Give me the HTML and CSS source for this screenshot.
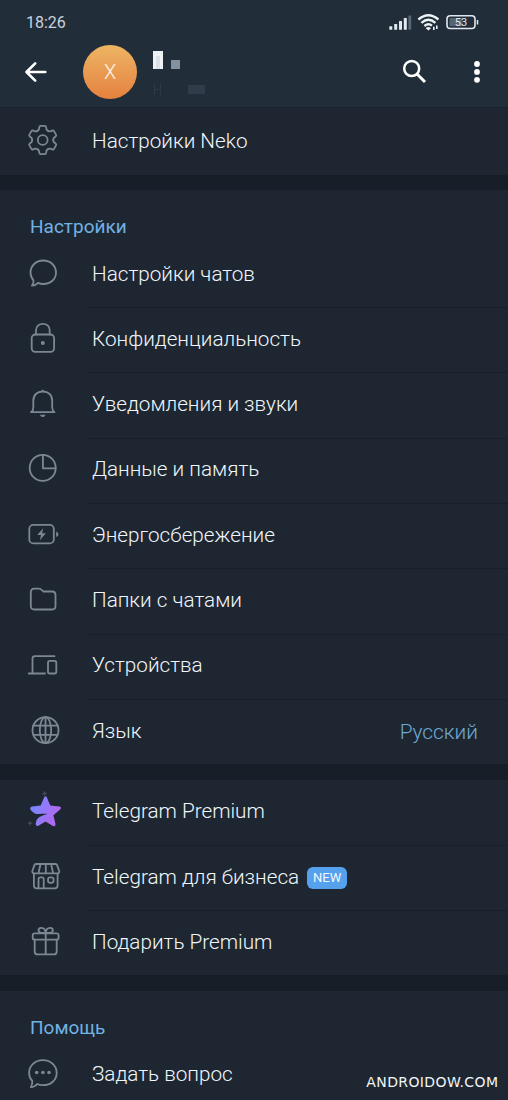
FILE: index.html
```html
<!DOCTYPE html>
<html lang="ru">
<head>
<meta charset="utf-8">
<title>Настройки</title>
<link rel="stylesheet" href="styles.css">
</head>
<body>
<main class="screen">
  <header class="header">
    <div class="status">
      <span class="clock">18:26</span>
      <svg class="status-icons" width="92" height="20" viewBox="388 12 92 20">
        <g fill="#e2e8ef">
          <rect x="389.3" y="26.3" width="3" height="3.5" rx=".5"/>
          <rect x="394.2" y="24" width="3" height="5.8" rx=".5"/>
          <rect x="399" y="21" width="3" height="8.8" rx=".5"/>
          <rect x="403.8" y="18" width="3" height="11.8" rx=".5"/>
          <rect x="408.4" y="15.5" width="2.8" height="14.3" rx=".5" fill="#596673"/>
        </g>
        <g fill="none" stroke="#edf2f7" stroke-width="2.3">
          <path d="M418.4 19.5Q428.4 11 438.4 19.5"/>
          <path d="M421.4 22.8Q428.4 16.8 435.4 22.8"/>
          <path d="M424.4 26Q428.4 22.6 432 25.6"/>
        </g>
        <path d="M425.7 28.2Q428.4 25.7 431 28.2L428.4 30.5Z" fill="#edf2f7"/>
        <path d="M433.8 26.8V30M436.8 25.5V29" stroke="#edf2f7" stroke-width="1.6"/>
        <rect x="447" y="15.7" width="28" height="12.8" rx="3.3" fill="none" stroke="#e2e8ef" stroke-width="1.6"/>
        <rect x="449.4" y="18" width="13" height="8.2" rx="1" fill="#566370"/>
        <path d="M477.5 20V24.5" stroke="#e2e8ef" stroke-width="1.5"/>
        <text x="461" y="26.2" class="battery-text">53</text>
      </svg>
    </div>
    <div class="toolbar">
      <svg width="24" height="24" viewBox="0 0 24 24" fill="none" stroke="#fff" stroke-width="2.6" stroke-linecap="round" stroke-linejoin="round"><path d="M21.3 12H3M11.2 3.3L2.5 12L11.2 20.7"/></svg>
      <div class="avatar">X</div>
      <svg class="masked" width="60" height="50" viewBox="150 48 60 50" shape-rendering="crispEdges">
        <path d="M153 51h10v18h-10z" fill="#eef2f5"/><path d="M156 56h4v13h-4z" fill="#dce2e8"/>
        <path d="M171 60h9v9h-9z" fill="#8491a0"/>
        <path d="M188 85h17v9h-17z" fill="#303c4a"/>
        <path d="M154.500 83v12M160.500 83v12M154 89h7" stroke="#2c3947" fill="none"/>
      </svg>
      <svg class="search" width="26" height="26" viewBox="402 58 26 26" fill="none" stroke="#fff" stroke-width="2.5"><circle cx="411.700" cy="68.500" r="7.500"/><path d="M417 74L425 82" stroke-width="3"/></svg>
      <svg class="more" width="8" height="26" viewBox="0 0 8 26" fill="#fff"><circle cx="4" cy="5" r="2.900"/><circle cx="4" cy="12.900" r="2.900"/><circle cx="4" cy="20.800" r="2.900"/></svg>
    </div>
  </header>

  <section class="group">
    <div class="row neko">
      <svg class="icon" viewBox="0 0 40 40"><defs><path id="tooth" d="M-5.300 -9.200C-4.100 -9.900 -3.900 -9.900 -3.700 -11L-3.400 -12.900Q-3.200 -14.200 -2 -14.200H2Q3.200 -14.200 3.400 -12.900L3.700 -11C3.900 -9.900 4.100 -9.900 5.300 -9.200"/></defs>
        <g transform="translate(19.700 19)"><circle r="4.900"/><use href="#tooth"/><use href="#tooth" transform="rotate(60)"/><use href="#tooth" transform="rotate(120)"/><use href="#tooth" transform="rotate(180)"/><use href="#tooth" transform="rotate(240)"/><use href="#tooth" transform="rotate(300)"/></g></svg>
      <span class="label">Настройки Neko</span>
    </div>
  </section>

  <section class="group">
    <h2 class="title">Настройки</h2>
    <div class="row">
      <svg class="icon" viewBox="0 0 40 40"><path d="M10.500 25.300C8.500 23.200 7.500 20.500 7.500 17.500C7.500 10.800 13 5.500 20.300 5.500S33 10.800 33 17.500S27.600 29 20.300 29C18.300 29 16.500 28.600 15 27.900C13.500 29.600 11.500 30.500 9 30.600C10.200 29 10.700 27.300 10.500 25.300Z"/></svg>
      <span class="label">Настройки чатов</span>
    </div>
    <div class="row">
      <svg class="icon" viewBox="0 0 40 40"><rect x="8.700" y="14.500" width="22.400" height="17.300" rx="3.500"/><path d="M13 14.500V10.500C13 6.200 15.900 3.800 19.800 3.800S26.700 6.200 26.700 10.500V14.500"/><circle cx="19.800" cy="22.900" r="2" class="solid"/></svg>
      <span class="label">Конфиденциальность</span>
    </div>
    <div class="row">
      <svg class="icon" viewBox="0 0 40 40"><path d="M8 27.200C9.500 26.200 10.300 25 10.300 22.500V16C10.300 10 14 6.500 19.700 6.500S29.200 10 29.200 16V22.500C29.200 25 30 26.200 31.500 27.200Z"/><path d="M18.300 6.200Q19.700 2.800 21.100 6.200Z" class="solid"/><path d="M17.100 29.700H22.300C22 32.600 17.500 32.600 17.100 29.700Z" class="fill"/></svg>
      <span class="label">Уведомления и звуки</span>
    </div>
    <div class="row">
      <svg class="icon" viewBox="0 0 40 40"><circle cx="19.700" cy="17.900" r="13"/><path d="M19.900 5V18.300H32.500"/></svg>
      <span class="label">Данные и память</span>
    </div>
    <div class="row">
      <svg class="icon" viewBox="0 0 40 40"><rect x="6.300" y="8.900" width="24.500" height="18.500" rx="4"/><path d="M33.200 15.400C36.100 16.500 36.100 19.900 33.200 21Z" class="fill"/><path d="M20.200 12.200L14.200 19H18L16.900 24.200L22.800 17.300H19.100Z" class="fill"/></svg>
      <span class="label">Энергосбережение</span>
    </div>
    <div class="row">
      <svg class="icon" viewBox="0 0 40 40"><path d="M7.800 11.300Q7.800 7.700 11.400 7.700H15.800Q17.600 7.700 18.800 9L20.200 10.500H29Q32.500 10.500 32.500 14V25Q32.500 28.500 29 28.500H11.300Q7.800 28.500 7.800 25Z"/></svg>
      <span class="label">Папки с чатами</span>
    </div>
    <div class="row">
      <svg class="icon" viewBox="0 0 40 40"><path d="M5.700 27.500H22M9.500 27.300V12.600Q9.500 10.200 11.900 10.200H31.500"/><rect x="25" y="14.900" width="8.300" height="12.600" rx="1.800"/></svg>
      <span class="label">Устройства</span>
    </div>
    <div class="row">
      <svg class="icon" viewBox="0 0 40 40"><circle cx="22.500" cy="18.200" r="13"/><ellipse cx="22.500" cy="18.200" rx="5.700" ry="13"/><path d="M22.500 5.200V31.200M10.500 13.600H34.500M10.500 22.800H34.500"/></svg>
      <span class="label">Язык</span>
      <span class="value">Русский</span>
    </div>
  </section>

  <section class="group">
    <div class="row">
      <svg class="icon" viewBox="0 0 40 40"><defs><linearGradient id="violet" x1="0" y1=".3" x2="1" y2=".75"><stop offset="0" stop-color="#7189ff"/><stop offset=".55" stop-color="#9d75f7"/><stop offset="1" stop-color="#bb61e8"/></linearGradient></defs>
        <path d="M21.100 5.400Q22.500 3.100 23.900 5.400L27.300 13.600L36.300 14.600Q39.300 15.400 37.300 17.300L30.400 23.300L32.500 32Q32.600 35.100 30 33.900L22.500 29.400L15.300 33.800Q12.300 34.700 12.700 31.500L13.600 28C15.500 24.700 19 23.400 24.500 21.900C19.500 21.700 15 22.400 12.300 21.800C9.500 20.500 7.600 18.400 7.100 16.600Q7 15 9 14.600L17.700 13.600Z" class="star"/>
        <path d="M21.500 -1.500L22.300 .7L24.300 1.500L22.300 2.300L21.500 4.500L20.700 2.300L18.700 1.500L20.700 .7ZM7 28.400L7.800 30.400L9.800 31.200L7.800 32L7 34L6.200 32L4.200 31.200L6.200 30.400Z" class="spark"/></svg>
      <span class="label">Telegram Premium</span>
    </div>
    <div class="row">
      <svg class="icon" viewBox="0 0 40 40"><path d="M13 6H32.500Q33.700 6 34.100 7.100L36.300 13.200Q36.300 15.400 34.400 15.400H11.200Q9.300 15.400 9.300 13.200L11.400 7.100Q11.800 6 13 6ZM17.500 6L15.500 15.200M22.800 6V15.200M28.100 6L30.100 15.200M10.900 16V27.500Q10.900 30.300 13.700 30.300H31.800Q34.600 30.300 34.600 27.500V16M15.500 30V21Q15.500 19.300 17.200 19.300H19Q20.700 19.300 20.700 21V30"/><rect x="25" y="19.300" width="5.600" height="5.600" rx="2.300"/></svg>
      <span class="label">Telegram для бизнеса</span>
      <span class="badge">NEW</span>
    </div>
    <div class="row">
      <svg class="icon" viewBox="0 0 40 40"><rect x="9.700" y="10.400" width="25.900" height="6.300" rx="2"/><path d="M11.700 16.700V28.400Q11.700 31.400 14.700 31.400H30.700Q33.700 31.400 33.700 28.400V16.700M22.700 10V31.200M22.700 10H18.500C14.500 9.500 14.700 4.900 18.100 4.800C20.900 4.700 22.500 6.500 22.700 10ZM22.700 10H26.900C30.900 9.500 30.700 4.900 27.300 4.800C24.500 4.700 22.900 6.500 22.700 10Z"/></svg>
      <span class="label">Подарить Premium</span>
    </div>
  </section>

  <section class="group">
    <h2 class="title">Помощь</h2>
    <div class="row">
      <svg class="icon" viewBox="0 0 40 40"><path d="M9.300 25.900C7.200 23.800 6.100 20.900 6.100 17.900C6.100 10.800 12 5.200 19.900 5.200S33.700 10.800 33.700 17.900S27.800 30.200 19.900 30.200C17.800 30.200 15.800 29.800 14.200 29C12.500 31 10.500 32 7.900 32.100C9 30.200 9.500 28.200 9.300 25.900Z"/><g class="fill"><circle cx="13.700" cy="17.500" r="1.800"/><circle cx="19.900" cy="17.500" r="1.800"/><circle cx="26" cy="17.500" r="1.800"/></g></svg>
      <span class="label">Задать вопрос</span>
    </div>
  </section>
  <div class="watermark">ANDROIDOW.COM</div>
</main>
</body>
</html>
```

FILE: styles.css
```css
* { box-sizing: border-box; }

body {
  margin: 0;
  background: #161f27;
  font-family: Roboto, "Noto Sans", sans-serif;
  color: #f0f6fc;
}

.screen {
  position: relative;
  display: flex;
  flex-direction: column;
  gap: 15.3px;
  width: 508px;
  height: 1100px;
  overflow: hidden;
}

.header {
  flex: none;
  height: 108px;
  margin-bottom: -15.3px;
  background: #222d3a;
  border-bottom: 1px solid #19232d;
}

.status {
  display: flex;
  justify-content: space-between;
  align-items: center;
  height: 44px;
  padding: 0 28px 0 26px;
}

.clock { font-size: 16px; line-height: 20px; padding-top: 1px; color: #c9d2dc; }
.battery-text { font: 400 11px Roboto, sans-serif; fill: #e2e8ef; text-anchor: middle; }

.toolbar {
  display: flex;
  align-items: center;
  height: 55px;
  padding: 0 27px 0 24px;
}

.avatar {
  display: flex;
  align-items: center;
  justify-content: center;
  width: 54px;
  height: 54px;
  margin: 0 13px 0 35px;
  border-radius: 50%;
  background: linear-gradient(#edb563, #e5813f);
  color: #fff4e6;
  font-size: 20px;
  font-weight: 300;
}

.masked { margin-top: 2px; }
.search { margin-left: auto; margin-top: -1px; }
.more { margin-left: 45px; }

.group {
  flex: none;
  background: #1e2731;
}

.title {
  height: 51.6px;
  margin: 0;
  padding: 23px 30px 0;
  font-size: 19px;
  line-height: 28px;
  font-weight: 400;
  color: #70b2e4;
}

.row {
  position: relative;
  display: flex;
  align-items: center;
  height: 65.3px;
  padding: 0 30px 0 23px;
}

.neko { height: 67px; }
.neko .icon { margin-top: -1px; }

.row + .row::before {
  content: "";
  position: absolute;
  top: 0;
  left: 88px;
  right: 0;
  height: 1px;
  background: #17202a;
}

.icon {
  flex: none;
  width: 40px;
  height: 40px;
  margin-right: 29px;
  overflow: visible;
  fill: none;
  stroke: #7d8793;
  stroke-width: 1.8;
  stroke-linecap: round;
  stroke-linejoin: round;
}

.icon .fill { fill: #7d8793; stroke: none; }
.icon .solid { fill: #7d8793; stroke: none; }
.icon .star { fill: url(#violet); stroke: none; }
.icon .spark { fill: #494c60; stroke: none; }

.label {
  padding-bottom: 2px;
  font-size: 20.7px;
  font-weight: 340;
  line-height: 28px;
  white-space: nowrap;
}

.value {
  margin-left: auto;
  font-size: 20.8px;
  font-weight: 300;
  color: #6faad6;
}

.badge {
  width: 40px;
  height: 22px;
  margin-left: 8px;
  border-radius: 6px;
  background: #55a1ed;
  color: #f2f8ff;
  font-size: 13px;
  line-height: 22px;
  text-align: center;
}

.watermark {
  position: absolute;
  right: 10px;
  bottom: 8px;
  font: 14px/20px "DejaVu Sans", sans-serif;
  letter-spacing: .38px;
  margin-right: -.38px;
  color: #f2f5f8;
}
```
